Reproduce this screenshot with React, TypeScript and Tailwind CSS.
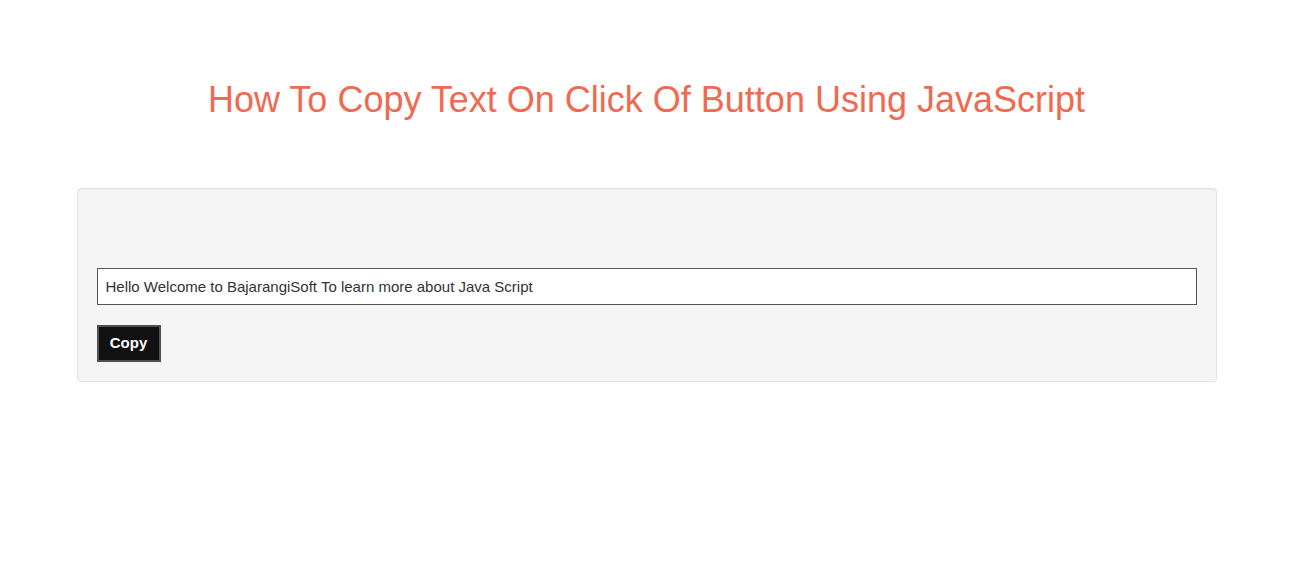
import React from "react";

export default function App() {
  return (
    <div className="min-h-[585px] bg-white" style={{ fontFamily: '"Liberation Sans", Arial, sans-serif' }}>
      <div className="w-[1293px]">
        <div className="mx-auto w-[1140px] pt-[80px]">
          <h1 className="text-center text-[36px] leading-[40px] text-[#ee6a50] font-normal">
            How To Copy Text On Click Of Button Using JavaScript
          </h1>
          <div className="mt-[68px] rounded-[4px] border border-[#e3e3e3] bg-[#f5f5f5] px-[19px] pt-[79px] pb-[19px] shadow-[inset_0_1px_1px_rgba(0,0,0,0.05)]">
            <input
              type="text"
              readOnly
              defaultValue="Hello Welcome to BajarangiSoft To learn more about Java Script"
              className="block h-[37px] w-full border border-[#555] bg-white px-[8px] text-[15px] text-[#333] outline-none"
            />
            <button className="mt-[20px] block h-[37px] w-[64px] border-2 border-[#505050] bg-[#111] text-[15px] font-bold text-white">
              Copy
            </button>
          </div>
        </div>
      </div>
    </div>
  );
}
